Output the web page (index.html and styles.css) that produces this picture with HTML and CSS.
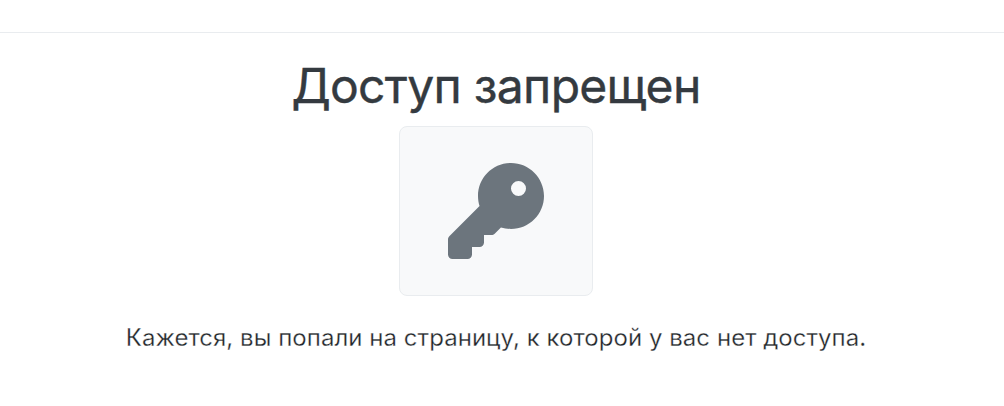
FILE: index.html
```html
<!DOCTYPE html>
<html lang="ru">
<head>
<meta charset="utf-8">
<title>Доступ запрещен</title>
<link rel="stylesheet" href="styles.css">
</head>
<body>
<header class="topbar"></header>
<main class="content">
<h1 class="title">Доступ запрещен</h1>
<div class="card">
<svg class="key" viewBox="0 0 512 512" aria-hidden="true"><path fill="currentColor" d="M336 352c97.200 0 176-78.800 176-176S433.200 0 336 0S160 78.800 160 176c0 18.700 2.900 36.800 8.300 53.700L7 391c-4.500 4.500-7 10.600-7 17v80c0 13.300 10.700 24 24 24h80c13.300 0 24-10.700 24-24V448h40c13.300 0 24-10.700 24-24V384h40c6.400 0 12.500-2.500 17-7l33.300-33.300c16.900 5.400 35 8.300 53.700 8.300zM376 96a40 40 0 1 1 0 80 40 40 0 1 1 0-80z"/></svg>
</div>
<p class="lead">Кажется, вы попали на страницу, к которой у вас нет доступа.</p>
</main>
</body>
</html>
```
FILE: styles.css
```css
* { box-sizing: border-box; }
body {
  margin: 0;
  background: #fff;
  color: #343a40;
  font-family: Inter, sans-serif;
}
.topbar {
  height: 33px;
  border-bottom: 1px solid #e9ecef;
}
.content {
  display: flex;
  flex-direction: column;
  align-items: center;
  padding: 23px 12px 0 0;
}
.title {
  margin: 0 0 11px;
  font-size: 48px;
  font-weight: 400;
  line-height: 59px;
  letter-spacing: -0.7px;
  -webkit-text-stroke: 0.4px currentColor;
}
.card {
  display: flex;
  align-items: center;
  justify-content: center;
  width: 194px;
  height: 170px;
  border: 1px solid #e9ecef;
  border-radius: 8px;
  background: #f8f9fa;
}
.key {
  width: 96px;
  height: 96px;
  color: #6c757d;
}
.lead {
  margin: 24px 0 0;
  font-size: 24px;
  font-weight: 400;
  line-height: 36px;
  letter-spacing: 0.04px;
  color: #212529;
  -webkit-text-stroke: 0.3px #fff;
}
```
